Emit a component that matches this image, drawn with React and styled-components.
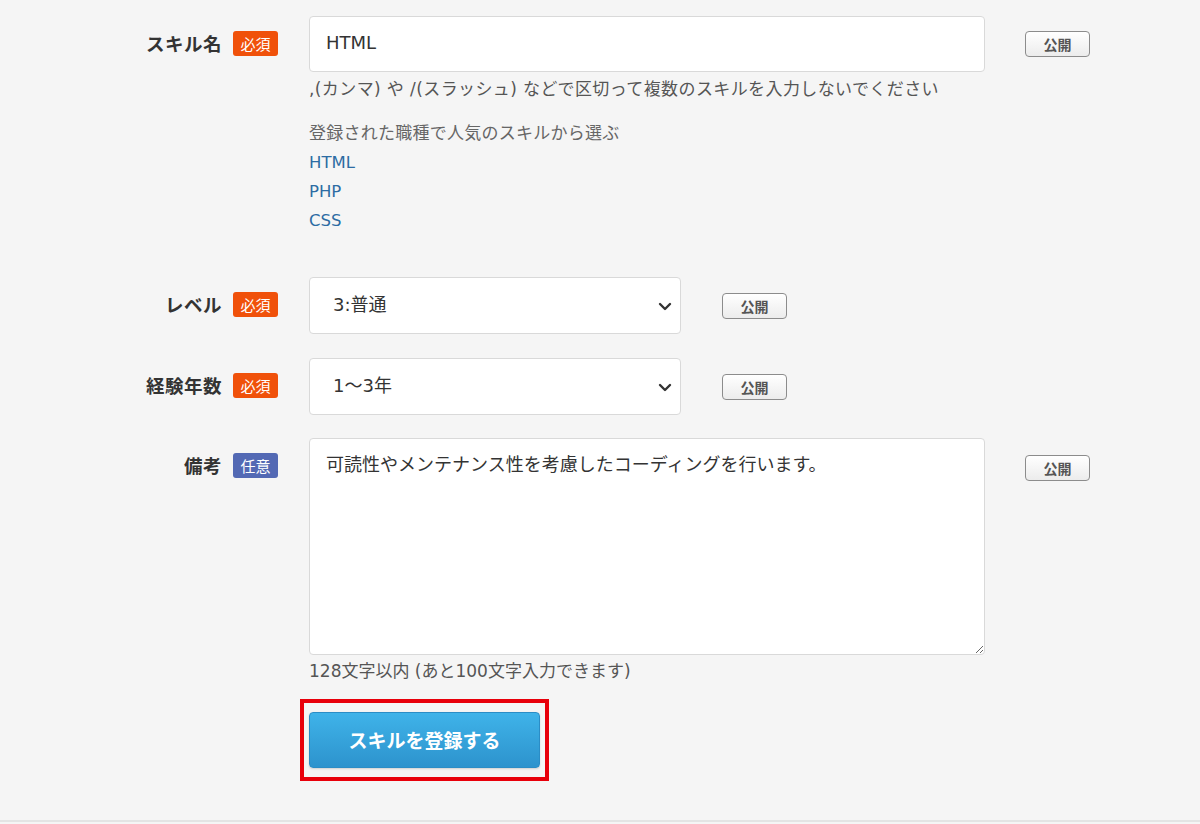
import React from "react";
import styled, { createGlobalStyle } from "styled-components";

const GlobalStyle = createGlobalStyle`
  html, body {
    margin: 0;
    padding: 0;
    background: #f5f5f5;
  }
  body {
    font-family: "DejaVu Sans", "Noto Sans CJK JP", sans-serif;
    color: #333;
  }
  * { box-sizing: border-box; }
`;

const Page = styled.div`
  height: 822px;
  padding-top: 16px;
  border-bottom: 2px solid #e4e4e4;
  overflow: hidden;
`;

const Form = styled.form`
  display: flex;
  flex-direction: column;
`;

const Row = styled.div`
  display: flex;
  align-items: flex-start;
  margin-bottom: ${(p) => p.$gap ?? 24}px;
`;

const LabelCell = styled.div`
  width: 278px;
  height: ${(p) => p.$h ?? 56}px;
  flex: none;
  display: flex;
  justify-content: flex-end;
  align-items: center;
  gap: 11px;
`;

const Label = styled.span`
  font-family: "Noto Sans CJK JP", sans-serif;
  font-weight: 700;
  font-size: 18.5px;
  line-height: 24px;
  color: #333;
  letter-spacing: 0.5px;
  margin-top: -3px;
`;

const Badge = styled.span`
  width: 45px;
  height: 25px;
  border-radius: 3px;
  background: ${(p) => (p.$optional ? "#5369b4" : "#f0510a")};
  color: #fff;
  font-family: "Noto Sans CJK JP", sans-serif;
  font-size: 15px;
  display: flex;
  align-items: center;
  justify-content: center;
  margin-top: -2px;
`;

const Field = styled.div`
  margin-left: 31px;
  width: ${(p) => p.$w}px;
  flex: none;
  display: flex;
  flex-direction: column;
`;

const TextInput = styled.input`
  width: 100%;
  height: 56px;
  border: 1px solid #d9d9d9;
  border-radius: 4px;
  background: #fff;
  padding: 0 16px 3px;
  font-family: inherit;
  font-size: 18px;
  color: #333;
  outline: none;
`;

const Hint = styled.p`
  margin: ${(p) => p.$mt ?? 6}px 0 0;
  font-size: 17px;
  line-height: 22px;
  letter-spacing: ${(p) => p.$ls ?? 0}px;
  color: #555;
`;

const Popular = styled.div`
  margin-top: 19px;
  padding-bottom: 18px;
  display: flex;
  flex-direction: column;
`;

const PopularTitle = styled.span`
  font-size: 17px;
  line-height: 29px;
  letter-spacing: 0.25px;
  color: #666;
`;

const SkillLink = styled.a`
  font-size: 16.5px;
  line-height: 29px;
  color: #2d6ca3;
  text-decoration: none;
  cursor: pointer;
  align-self: flex-start;
`;

const SelectWrap = styled.div`
  position: relative;
  width: 100%;
`;

const Select = styled.select`
  appearance: none;
  -webkit-appearance: none;
  width: 100%;
  height: 57px;
  border: 1px solid #d9d9d9;
  border-radius: 4px;
  background: #fff;
  padding: 0 40px 3px 23px;
  font-family: inherit;
  font-size: 18px;
  color: #333;
  outline: none;
`;

const Chevron = styled.svg`
  position: absolute;
  right: 9px;
  top: 50%;
  width: 14px;
  height: 9px;
  margin-top: -4px;
  pointer-events: none;
`;

const TextArea = styled.textarea`
  width: 100%;
  height: 217px;
  border: 1px solid #d9d9d9;
  border-radius: 4px;
  background: #fff;
  padding: 12px 16px;
  font-family: inherit;
  font-size: 18px;
  line-height: 28px;
  color: #333;
  outline: none;
  resize: vertical;
  display: block;
`;

const PublicCell = styled.div`
  margin-left: ${(p) => p.$ml}px;
  height: ${(p) => p.$h ?? 56}px;
  display: flex;
  align-items: center;
`;

const PublicButton = styled.button`
  width: 65px;
  height: 26px;
  border: 1px solid #8c8c8c;
  border-radius: 4px;
  background: linear-gradient(#ffffff, #ececec);
  color: #555;
  font-family: "Noto Sans CJK JP", sans-serif;
  font-weight: 700;
  font-size: 14px;
  padding: 0;
  cursor: pointer;
`;

const SubmitWrap = styled.div`
  position: relative;
  margin-top: 30px;
  align-self: flex-start;
  &::after {
    content: "";
    position: absolute;
    left: -9px;
    right: -9px;
    top: -13px;
    bottom: -13px;
    border: 4.5px solid #e8000b;
    pointer-events: none;
  }
`;

const SubmitButton = styled.button`
  width: 231px;
  height: 56px;
  border: 1px solid #2b8dc6;
  border-radius: 4px;
  background: linear-gradient(#3fb3e9, #2d93cd);
  box-shadow: 0 1px 2px rgba(0, 0, 0, 0.15);
  color: #fff;
  font-family: "Noto Sans CJK JP", sans-serif;
  font-weight: 700;
  font-size: 19px;
  padding-bottom: 3px;
  cursor: pointer;
  display: block;
`;

const ChevronIcon = () => (
  <Chevron viewBox="0 0 14 9">
    <path d="M2 2l5 5 5-5" fill="none" stroke="#333" strokeWidth="2.4" strokeLinecap="round" strokeLinejoin="round" />
  </Chevron>
);

export default function App() {
  return (
    <>
      <GlobalStyle />
      <Page>
        <Form onSubmit={(e) => e.preventDefault()}>
          <Row>
            <LabelCell>
              <Label>スキル名</Label>
              <Badge>必須</Badge>
            </LabelCell>
            <Field $w={676}>
              <TextInput defaultValue="HTML" />
              <Hint $ls={0.4}>,(カンマ) や /(スラッシュ) などで区切って複数のスキルを入力しないでください</Hint>
              <Popular>
                <PopularTitle>登録された職種で人気のスキルから選ぶ</PopularTitle>
                <SkillLink>HTML</SkillLink>
                <SkillLink>PHP</SkillLink>
                <SkillLink>CSS</SkillLink>
              </Popular>
            </Field>
            <PublicCell $ml={40}>
              <PublicButton type="button">公開</PublicButton>
            </PublicCell>
          </Row>

          <Row>
            <LabelCell $h={57}>
              <Label>レベル</Label>
              <Badge>必須</Badge>
            </LabelCell>
            <Field $w={372}>
              <SelectWrap>
                <Select defaultValue="3">
                  <option value="1">1:初心者</option>
                  <option value="2">2:初級</option>
                  <option value="3">3:普通</option>
                  <option value="4">4:上級</option>
                  <option value="5">5:エキスパート</option>
                </Select>
                <ChevronIcon />
              </SelectWrap>
            </Field>
            <PublicCell $ml={41} $h={57}>
              <PublicButton type="button">公開</PublicButton>
            </PublicCell>
          </Row>

          <Row $gap={23}>
            <LabelCell $h={57}>
              <Label>経験年数</Label>
              <Badge>必須</Badge>
            </LabelCell>
            <Field $w={372}>
              <SelectWrap>
                <Select defaultValue="b">
                  <option value="a">1年未満</option>
                  <option value="b">1〜3年</option>
                  <option value="c">3〜5年</option>
                  <option value="d">5年以上</option>
                </Select>
                <ChevronIcon />
              </SelectWrap>
            </Field>
            <PublicCell $ml={41} $h={57}>
              <PublicButton type="button">公開</PublicButton>
            </PublicCell>
          </Row>

          <Row $gap={0}>
            <LabelCell>
              <Label>備考</Label>
              <Badge $optional>任意</Badge>
            </LabelCell>
            <Field $w={676}>
              <TextArea defaultValue="可読性やメンテナンス性を考慮したコーディングを行います。" />
              <Hint $mt={5}>128文字以内 (あと100文字入力できます)</Hint>
              <SubmitWrap>
                <SubmitButton type="submit">スキルを登録する</SubmitButton>
              </SubmitWrap>
            </Field>
            <PublicCell $ml={40} $h={60}>
              <PublicButton type="button">公開</PublicButton>
            </PublicCell>
          </Row>
        </Form>
      </Page>
    </>
  );
}
